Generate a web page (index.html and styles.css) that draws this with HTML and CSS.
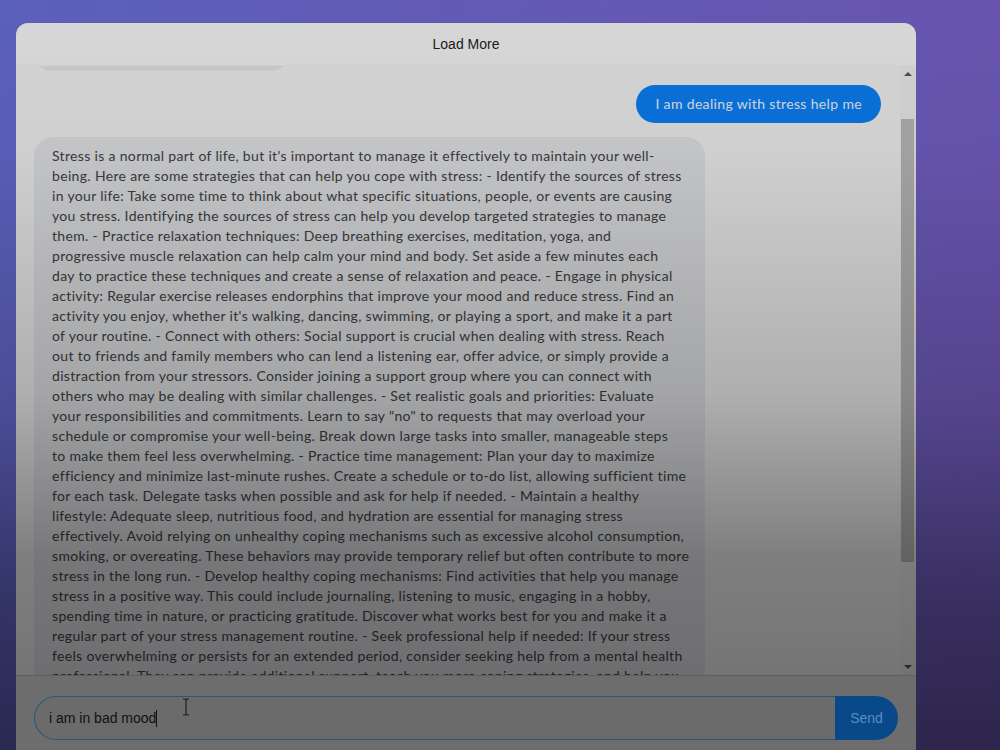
FILE: index.html
```html
<!DOCTYPE html>
<html lang="en">
<head>
<meta charset="utf-8">
<title>Chat</title>
<link rel="stylesheet" href="styles.css">
</head>
<body>
<div class="chat">
  <div class="chat-top">
    <div class="chat-header">Load More</div>
    <div class="chat-body">
      <div class="messages">
        <div class="msg bot partial"></div>
        <div class="msg user">I am dealing with stress help me</div>
        <div class="msg bot reply">Stress is a normal part of life, but it's important to manage it effectively to maintain your well-<br>being. Here are some strategies that can help you cope with stress: - Identify the sources of stress<br>in your life: Take some time to think about what specific situations, people, or events are causing<br>you stress. Identifying the sources of stress can help you develop targeted strategies to manage<br>them. - Practice relaxation techniques: Deep breathing exercises, meditation, yoga, and<br>progressive muscle relaxation can help calm your mind and body. Set aside a few minutes each<br>day to practice these techniques and create a sense of relaxation and peace. - Engage in physical<br>activity: Regular exercise releases endorphins that improve your mood and reduce stress. Find an<br>activity you enjoy, whether it's walking, dancing, swimming, or playing a sport, and make it a part<br>of your routine. - Connect with others: Social support is crucial when dealing with stress. Reach<br>out to friends and family members who can lend a listening ear, offer advice, or simply provide a<br>distraction from your stressors. Consider joining a support group where you can connect with<br>others who may be dealing with similar challenges. - Set realistic goals and priorities: Evaluate<br>your responsibilities and commitments. Learn to say "no" to requests that may overload your<br>schedule or compromise your well-being. Break down large tasks into smaller, manageable steps<br>to make them feel less overwhelming. - Practice time management: Plan your day to maximize<br>efficiency and minimize last-minute rushes. Create a schedule or to-do list, allowing sufficient time<br>for each task. Delegate tasks when possible and ask for help if needed. - Maintain a healthy<br>lifestyle: Adequate sleep, nutritious food, and hydration are essential for managing stress<br>effectively. Avoid relying on unhealthy coping mechanisms such as excessive alcohol consumption,<br>smoking, or overeating. These behaviors may provide temporary relief but often contribute to more<br>stress in the long run. - Develop healthy coping mechanisms: Find activities that help you manage<br>stress in a positive way. This could include journaling, listening to music, engaging in a hobby,<br>spending time in nature, or practicing gratitude. Discover what works best for you and make it a<br>regular part of your stress management routine. - Seek professional help if needed: If your stress<br>feels overwhelming or persists for an extended period, consider seeking help from a mental health<br>professional. They can provide additional support, teach you more coping strategies, and help you<br>navigate through challenging times.</div>
      </div>
      <div class="scrollbar">
        <div class="arrow up"></div>
        <div class="track"><div class="thumb"></div></div>
        <div class="arrow down"></div>
      </div>
    </div>
  </div>
  <div class="chat-footer">
    <div class="input-group">
      <div class="input">i am in bad mood<span class="caret"></span></div>
      <div class="send">Send</div>
    </div>
  </div>
</div>
<svg class="cursor" width="10" height="18" viewBox="0 0 10 18"><path d="M2 1h2l1 1 1-1h2M5 2v14M2 17h2l1-1 1 1h2" fill="none" stroke="#222" stroke-width="1.2"/></svg>
</body>
</html>
```

FILE: styles.css
```css
html, body {
  margin: 0;
  padding: 0;
}
body {
  width: 1000px;
  height: 750px;
  overflow: hidden;
  position: relative;
  background:
    linear-gradient(to bottom, rgba(0,0,0,0) 0%, rgba(0,0,0,0.03) 20%, rgba(0,0,0,0.2) 55%, rgba(0,0,0,0.45) 80%, rgba(0,0,0,0.56) 100%),
    linear-gradient(100deg, #5b60bb 0%, #6558b2 60%, #6854ae 100%);
  font-family: "Liberation Sans", Arial, sans-serif;
}
.chat {
  margin: 23px 0 0 16px;
  width: 900px;
  height: 740px;
  border-radius: 12px 12px 0 0;
  overflow: hidden;
  display: flex;
  flex-direction: column;
}
.chat-top {
  position: relative;
  display: flex;
  flex-direction: column;
  height: 652px;
}
.chat-top::after {
  content: "";
  position: absolute;
  inset: 0;
  pointer-events: none;
  background: linear-gradient(to bottom,
    rgba(0,0,0,0.13) 0%,
    rgba(0,0,0,0.14) 19%,
    rgba(0,0,0,0.28) 57%,
    rgba(0,0,0,0.48) 82%,
    rgba(0,0,0,0.51) 97%,
    rgba(0,0,0,0.52) 100%);
}
.chat-header {
  height: 43px;
  flex: none;
  display: flex;
  align-items: center;
  justify-content: center;
  background: #f6f6f6;
  color: #1e1e1e;
  font-size: 14px;
  border-bottom: 1px solid #efefef;
  box-sizing: border-box;
}
.chat-body {
  flex: 1;
  display: flex;
  min-height: 0;
  background: #f2f2f2;
}
.messages {
  flex: 1;
  overflow: hidden;
  padding: 0 19px 0 18px;
  display: flex;
  flex-direction: column;
  gap: 14px;
}
.msg {
  border-radius: 19px;
  font-family: Lato, "Open Sans", sans-serif;
  font-size: 14px;
  line-height: 20px;
  flex: none;
}
.msg.bot.partial {
  width: 255px;
  height: 36px;
  margin-top: -31px;
  background: #e4e5e8;
}
.msg.user {
  align-self: flex-end;
  background: #0b80f7;
  color: #eef4fb;
  padding: 9px 19px;
  letter-spacing: 0.35px;
}
.msg.bot.reply {
  background: #e3e4e7;
  color: #424242;
  padding: 9px 18px 11px;
  width: 671px;
  box-sizing: border-box;
  white-space: nowrap;
  letter-spacing: 0.33px;
}
.scrollbar {
  width: 16px;
  flex: none;
  display: flex;
  flex-direction: column;
  align-items: center;
  background: #eeeeee;
}
.arrow {
  width: 0;
  height: 0;
  border-left: 4px solid transparent;
  border-right: 4px solid transparent;
  margin: 6px 0;
}
.arrow.up {
  border-bottom: 4px solid #555;
}
.arrow.down {
  border-top: 4px solid #555;
}
.track {
  flex: 1;
  width: 100%;
  padding: 37px 2px 0 1px;
  box-sizing: border-box;
}
.thumb {
  height: 443px;
  background: #bbbbbb;
}
.chat-footer {
  flex: 1;
  background: #6d6d6d;
  border-top: 1px solid #5e5e5e;
  padding: 20px 18px;
}
.input-group {
  display: flex;
  height: 44px;
}
.input {
  flex: 1;
  border: 1px solid #245a80;
  border-right: none;
  border-radius: 22px 0 0 22px;
  display: flex;
  align-items: center;
  padding-left: 14px;
  font-size: 14px;
  color: #111;
  background: #6b6b6b;
}
.caret {
  display: inline-block;
  width: 1px;
  height: 17px;
  background: #111;
}
.send {
  width: 63px;
  background: #09498a;
  color: #5a8cbd;
  border-radius: 0 22px 22px 0;
  display: flex;
  align-items: center;
  justify-content: center;
  font-size: 14px;
}
.cursor {
  position: absolute;
  left: 181px;
  top: 698px;
}
```
